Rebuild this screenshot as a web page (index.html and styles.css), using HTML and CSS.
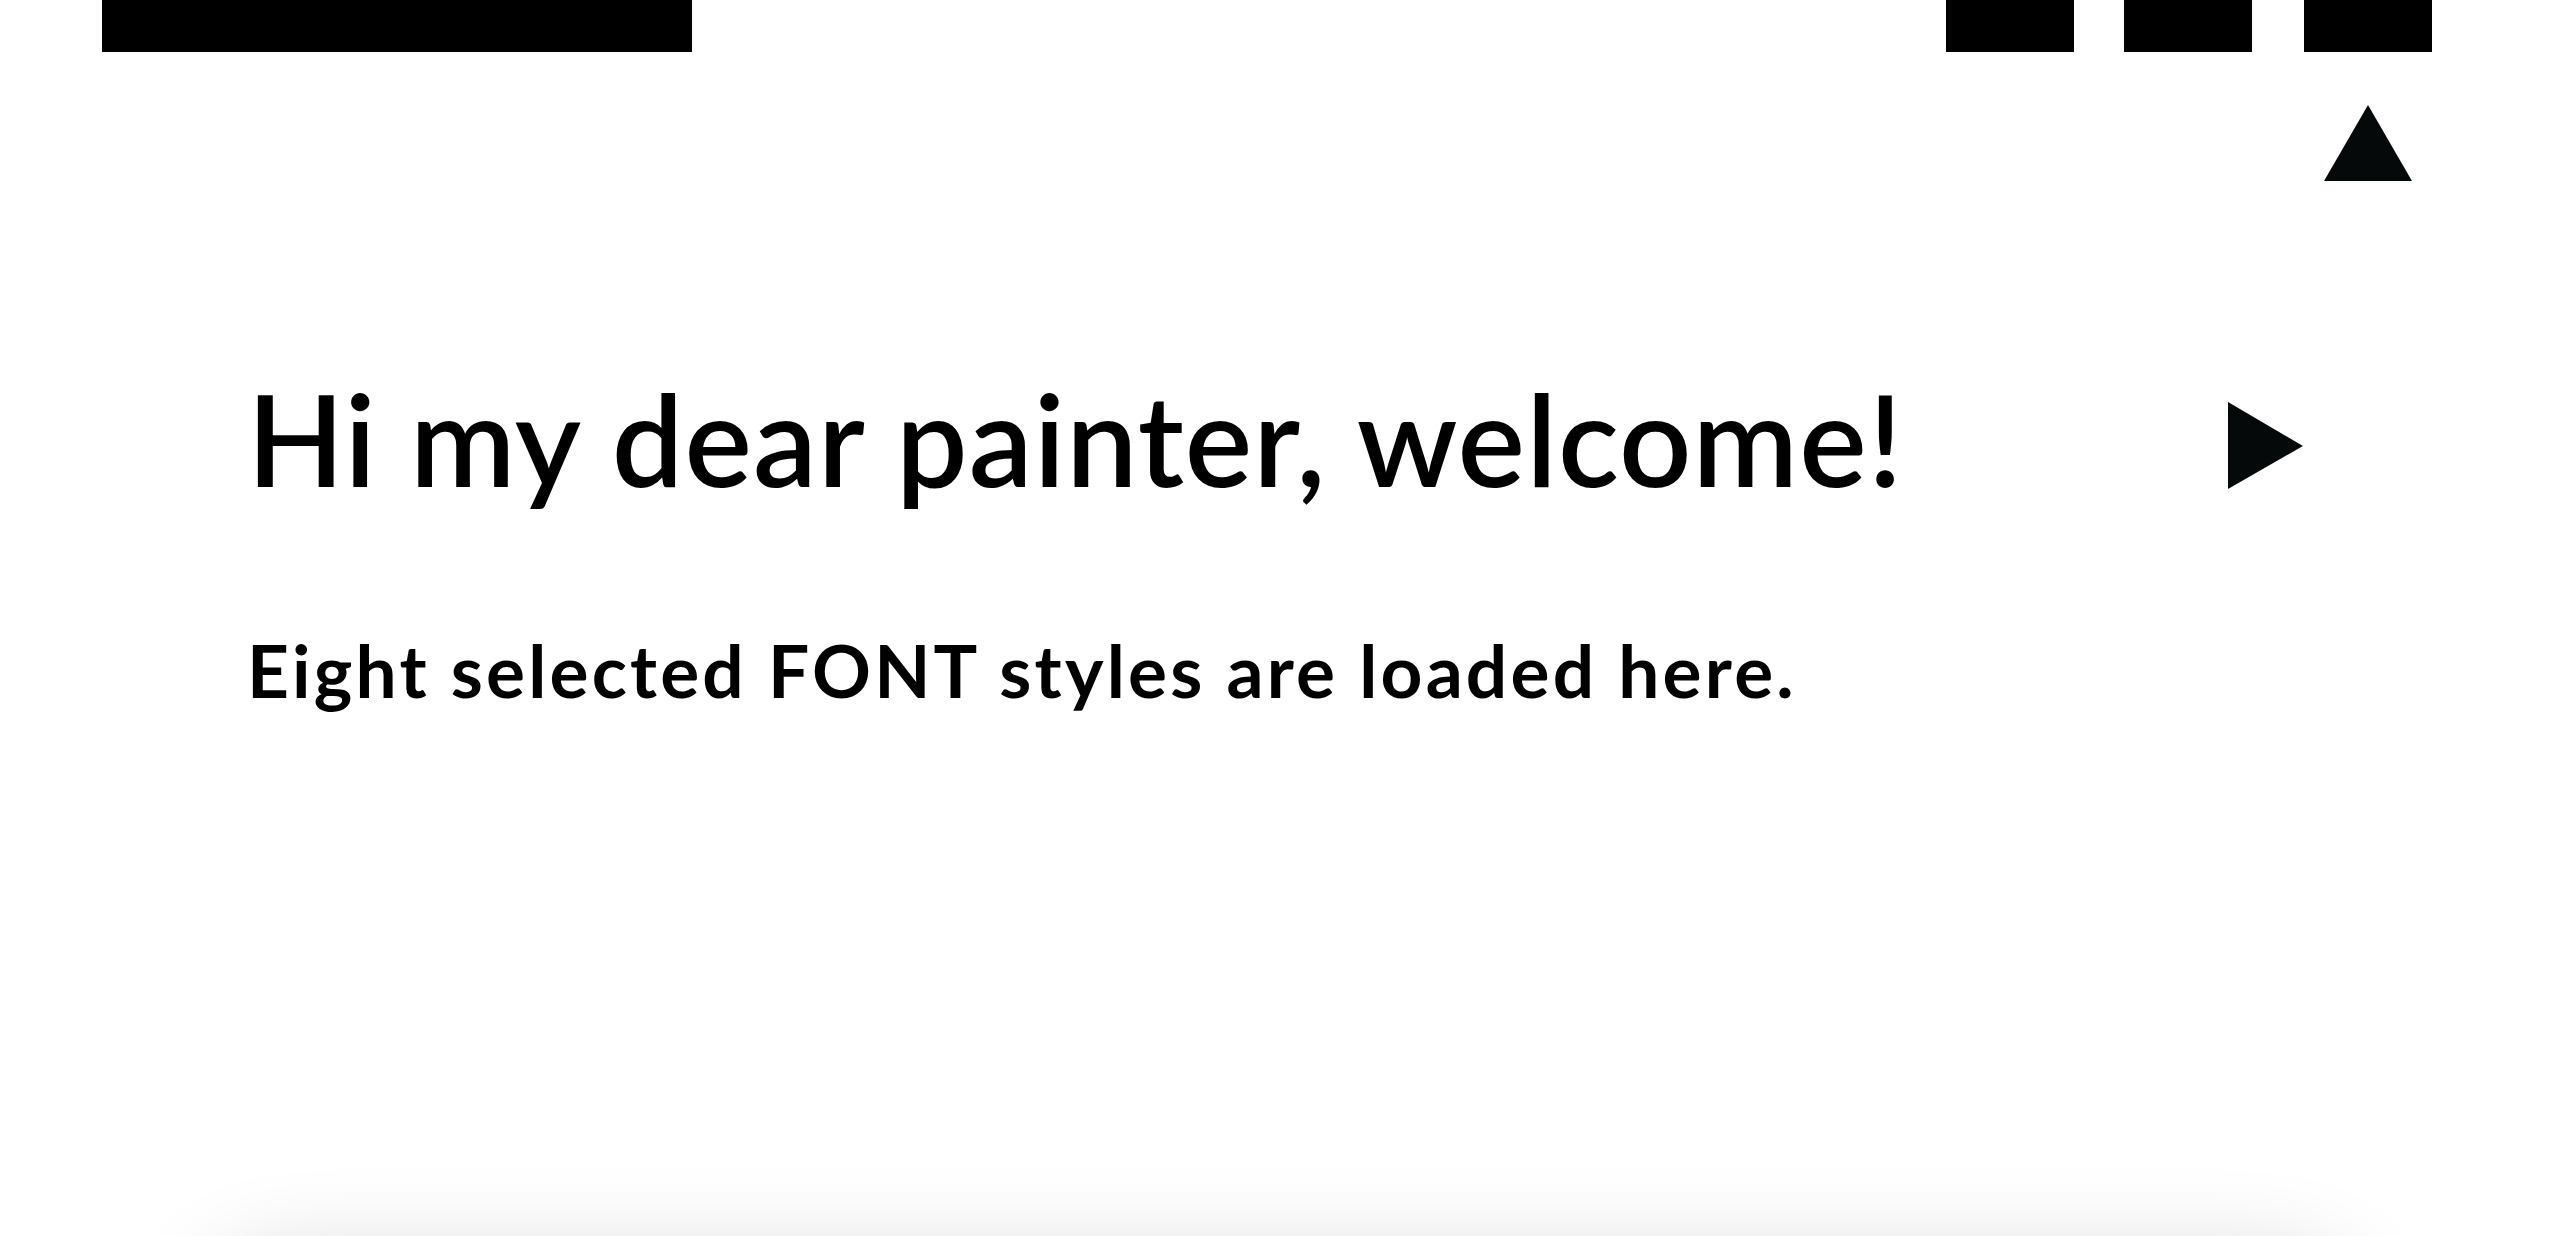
FILE: index.html
```html
<!DOCTYPE html>
<html lang="en">
<head>
<meta charset="utf-8">
<title>Welcome</title>
<link rel="stylesheet" href="styles.css">
</head>
<body>
<div class="page">
  <header class="topbar">
    <div class="bar bar-wide"></div>
    <nav class="bar-group">
      <div class="bar"></div>
      <div class="bar bar-mid"></div>
      <div class="bar-col">
        <div class="bar"></div>
        <svg class="tri-up" width="88" height="76" viewBox="0 0 88 76"><polygon points="44,0 88,76 0,76" fill="#060909"/></svg>
      </div>
    </nav>
  </header>
  <main class="content">
    <div class="hero-row">
      <h1 class="title">Hi my dear painter, welcome!</h1>
      <svg class="tri-right" width="75" height="87" viewBox="0 0 75 87"><polygon points="0,0 75,44 0,87" fill="#060909"/></svg>
    </div>
    <p class="subtitle">Eight selected FONT styles are loaded here.</p>
  </main>
  <section class="card"></section>
</div>
</body>
</html>
```
FILE: styles.css
```css
html, body {
  margin: 0;
  padding: 0;
  height: 1236px;
  overflow: hidden;
  background: #fff;
}
.page {
  height: 1236px;
  overflow: hidden;
  font-family: Lato, "Liberation Sans", sans-serif;
  color: #000;
}
.topbar {
  display: flex;
  justify-content: space-between;
  align-items: flex-start;
  padding: 0 128px 0 102px;
}
.bar {
  width: 128px;
  height: 52px;
  background: #000;
}
.bar-wide {
  width: 590px;
}
.bar-group {
  display: flex;
  align-items: flex-start;
  gap: 50px;
}
.bar-mid {
  margin-right: 2px;
}
.bar-col {
  display: flex;
  flex-direction: column;
  align-items: center;
}
.tri-up {
  display: block;
  margin-top: 53px;
}
.content {
  padding: 0 257px 0 247px;
  margin-top: -129px;
}
.hero-row {
  display: flex;
  justify-content: space-between;
  align-items: flex-start;
  margin-top: 322px;
}
.title {
  margin: 0;
  font-size: 127px;
  line-height: 128px;
  font-weight: 600;
  letter-spacing: 1.1px;
  white-space: nowrap;
}
.tri-right {
  display: block;
  margin-top: 28px;
}
.subtitle {
  margin: 132px 0 0;
  font-size: 73px;
  line-height: 73px;
  font-weight: 700;
  letter-spacing: 3.2px;
  white-space: nowrap;
}
.card {
  margin: 560px 215px 0;
  height: 400px;
  border-radius: 60px;
  background: #fff;
  box-shadow: 0 0 100px rgba(0, 0, 0, 0.2);
}
```
